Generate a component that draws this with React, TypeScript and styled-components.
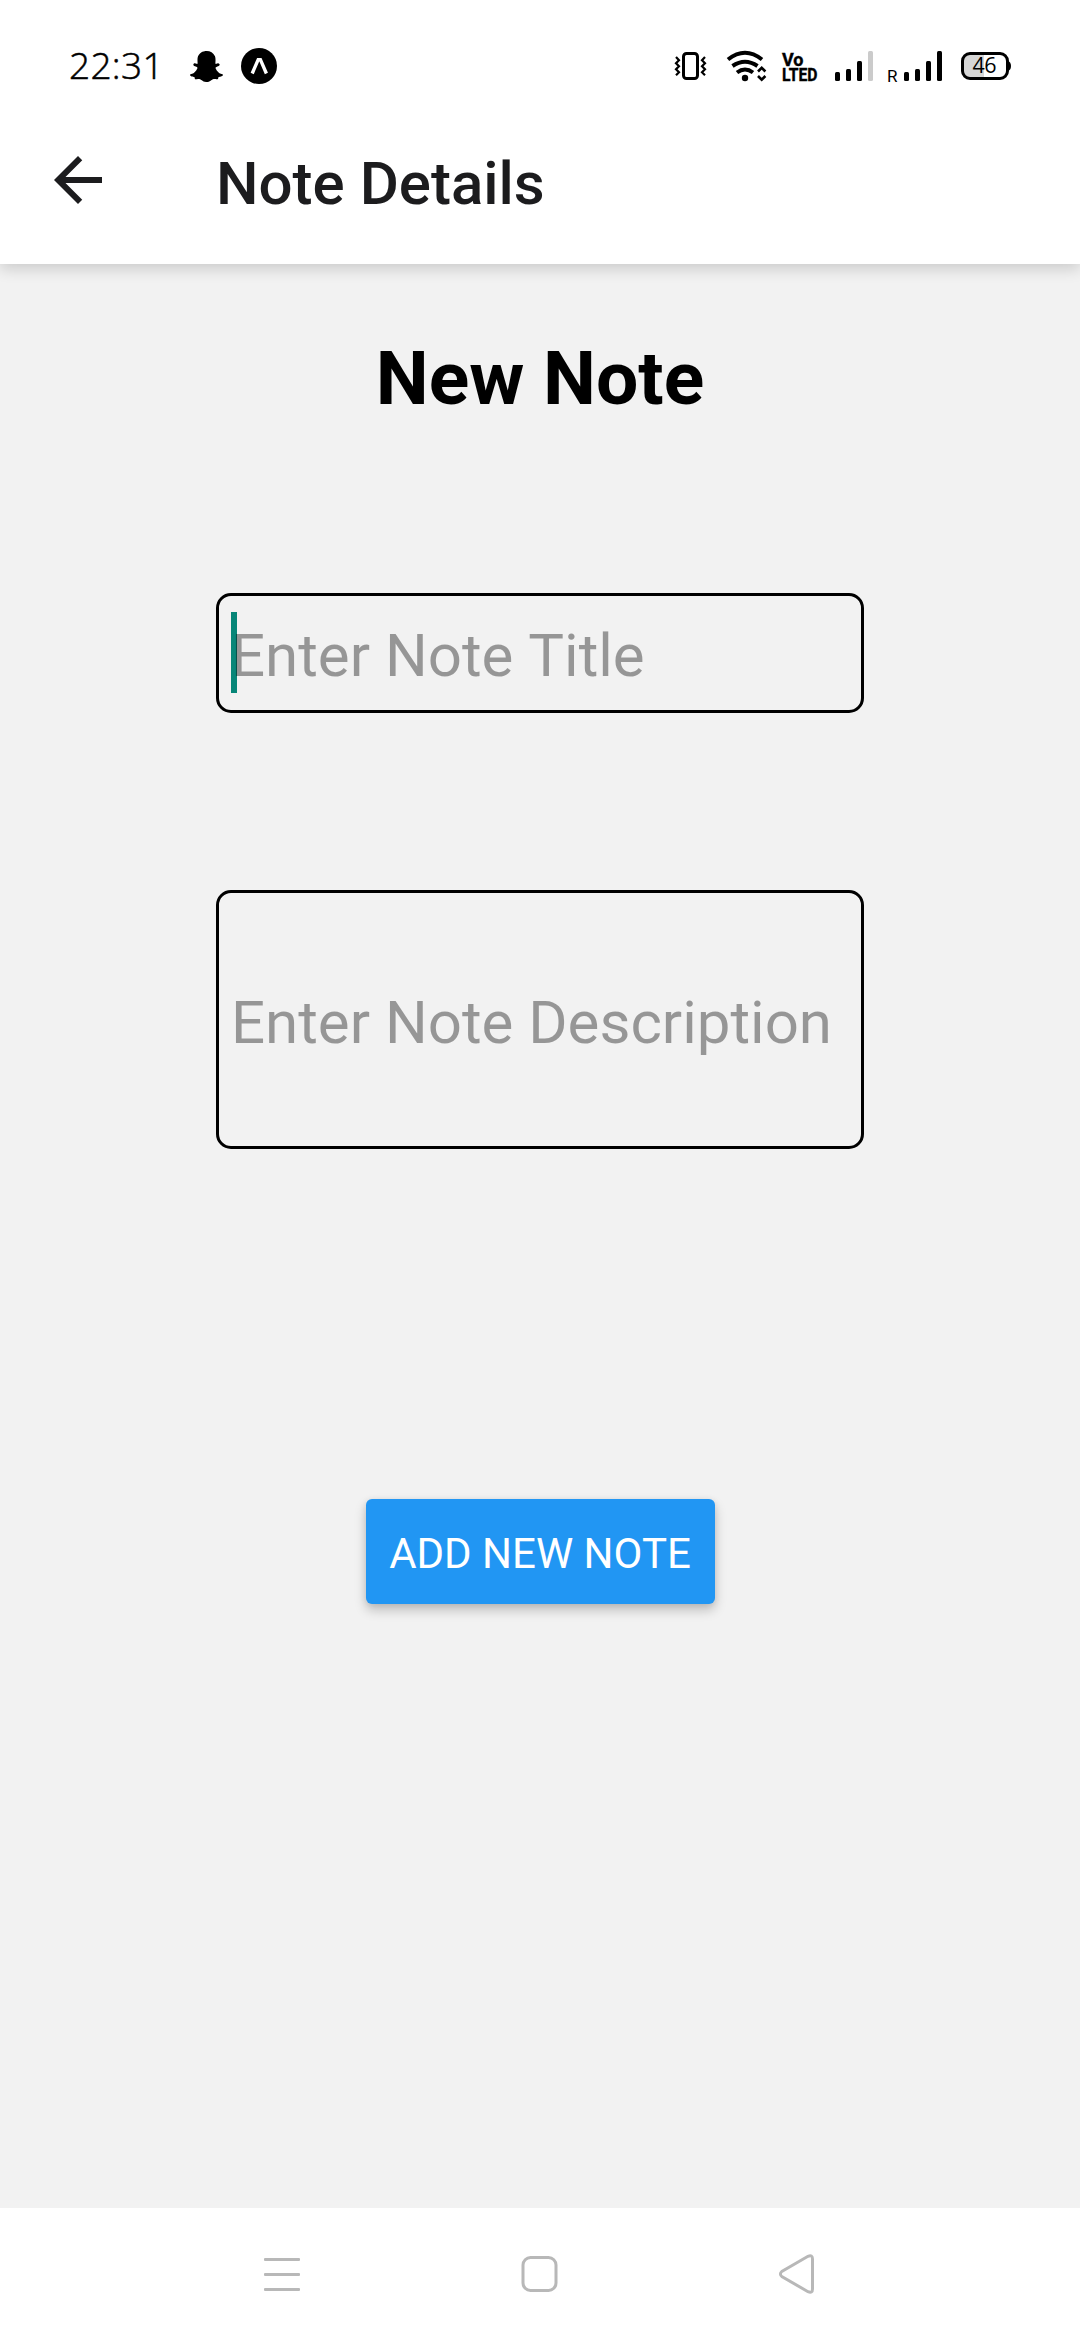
import React from "react";
import styled, { createGlobalStyle } from "styled-components";
import { FaSnapchatGhost } from "react-icons/fa";

const GlobalStyle = createGlobalStyle`
  *, *::before, *::after { box-sizing: border-box; }
  body { margin: 0; background: #f2f2f2; font-family: Roboto, "Noto Sans", sans-serif; }
`;

const Screen = styled.div`
  display: flex;
  flex-direction: column;
  width: 1080px;
  height: 2340px;
  background: #f2f2f2;
  overflow: hidden;
`;

const TopArea = styled.div`
  position: relative;
  flex: none;
  height: 264px;
  background: #fff;
  box-shadow: 0 5px 14px rgba(0, 0, 0, 0.16);
`;

const StatusBar = styled.div`
  display: flex;
  align-items: center;
  height: 132px;
  padding: 0 69px 0 69px;
  color: #000;
`;

const Clock = styled.span`
  width: 121px;
  padding-bottom: 3px;
  font: 300 37px/129px "Open Sans", sans-serif;
  letter-spacing: 0.3px;
  -webkit-text-stroke: 0.5px #000;
`;

const NotificationIcons = styled.div`
  display: flex;
  align-items: center;
  gap: 18px;
  flex: 1;

  svg { display: block; }
`;

const SystemIcons = styled.svg`
  display: block;
  width: 340px;
  height: 132px;
  margin-right: -2px;
`;

const AppBar = styled.header`
  display: flex;
  align-items: center;
  height: 96px;
  padding-left: 42px;
`;

const BackButton = styled.button`
  display: block;
  width: 72px;
  height: 72px;
  padding: 0;
  margin-right: 102px;
  border: 0;
  background: none;
  color: #1c1c1e;

  svg { display: block; }
`;

const AppTitle = styled.h1`
  margin: 7px 0 0;
  font-size: 60px;
  line-height: 72px;
  font-weight: 500;
  color: #1c1c1e;
`;

const Content = styled.main`
  display: flex;
  flex: 1;
  flex-direction: column;
  align-items: center;
  padding-top: 64px;
`;

const Heading = styled.h2`
  margin: 0;
  font-size: 75px;
  line-height: 100px;
  font-weight: 700;
  color: #000;
`;

const Field = styled.div<{ $height: number; $top: number }>`
  position: relative;
  flex: none;
  width: 648px;
  height: ${(p) => p.$height}px;
  margin-top: ${(p) => p.$top}px;
  border: 3px solid #000;
  border-radius: 15px;
`;

const Caret = styled.span`
  position: absolute;
  left: 12px;
  top: 16px;
  width: 6px;
  height: 81px;
  background: #078678;
`;

const TextInput = styled.input<{ $offset: number }>`
  position: relative;
  display: block;
  width: 100%;
  height: 100%;
  padding: ${(p) => p.$offset}px 0 0 12px;
  border: 0;
  outline: 0;
  background: transparent;
  font: 400 60px/72px Roboto, "Noto Sans", sans-serif;
  font-kerning: none;

  &::placeholder { color: rgba(0, 0, 0, 0.38); opacity: 1; }
`;

const SubmitButton = styled.button`
  flex: none;
  width: 349px;
  height: 105px;
  margin-top: 350px;
  padding: 4px 0 0;
  border: 0;
  border-radius: 6px;
  background: #2196f3;
  color: #fff;
  font: 400 42px/50px Roboto, "Noto Sans", sans-serif;
  white-space: nowrap;
  box-shadow: 0 6px 12px rgba(0, 0, 0, 0.22), 0 1px 6px rgba(0, 0, 0, 0.08);
`;

const NavBar = styled.nav`
  display: flex;
  flex: none;
  align-items: center;
  justify-content: space-between;
  height: 132px;
  padding: 0 264px;
  background: #fff;

  svg { display: block; overflow: visible; }
`;

const barTops = [72, 69, 61, 51];

function SignalBars({ x, lit }: { x: number; lit: number }) {
  return (
    <g>
      {barTops.map((top, i) => (
        <rect key={top} x={x + i * 11} y={top} width={5} height={81 - top} rx={1.5} fill={i < lit ? "#000" : "#cbcbcb"} />
      ))}
    </g>
  );
}

function StatusIcons() {
  return (
    <SystemIcons viewBox="673 0 340 132">
      <g fill="none" stroke="#000" strokeWidth="3">
        <rect x="683.5" y="53.5" width="14" height="25" rx="3" />
        <path d="M676 57l3 3.2-3 3 3 3-3 3 3 3-3 3M705 57l-3 3.2 3 3-3 3 3 3-3 3 3 3" strokeWidth="2.2" />
        <path d="M728 59.5Q745 46 762 59.5" strokeWidth="4" />
        <path d="M732.5 66Q745 57.5 757.5 66" strokeWidth="4" />
        <path d="M737 72.5Q745 66.5 753 72.5" strokeWidth="4" />
        <path d="M758 71.5l3.7-3.7 3.7 3.7M758 76l3.7 3.7 3.7-3.7" strokeWidth="2.6" />
      </g>
      <circle cx="745" cy="78" r="3.2" />
      <text fontFamily="Roboto, sans-serif" fontWeight="700" fontSize="19" stroke="#000" strokeWidth="0.4">
        <tspan x="782" y="65.5" textLength="21.5" lengthAdjust="spacingAndGlyphs">Vo</tspan>
        <tspan x="782" y="80.7" textLength="35.5" lengthAdjust="spacingAndGlyphs">LTED</tspan>
      </text>
      <SignalBars x={835} lit={3} />
      <text x="887" y="81.5" fontFamily="Roboto, sans-serif" fontSize="17">R</text>
      <SignalBars x={904} lit={4} />
      <path d="M970 54H984V78H970Q963 78 963 71V61Q963 54 970 54Z" fill="#d6d6d6" />
      <rect x="962.5" y="53.5" width="45" height="25" rx="7.5" fill="none" stroke="#000" strokeWidth="3" />
      <path d="M1008 61q3 1 3 5t-3 5z" />
      <text x="972.5" y="73" fontFamily="Open Sans, sans-serif" fontSize="21.5" textLength="24">46</text>
    </SystemIcons>
  );
}

export default function App() {
  return (
    <>
      <GlobalStyle />
      <Screen>
        <TopArea>
          <StatusBar>
            <Clock>22:31</Clock>
            <NotificationIcons>
              <FaSnapchatGhost size={33} />
              <svg width="36" height="36" viewBox="0 0 36 36">
                <circle cx="18" cy="18" r="18" />
                <path d="M11.2 25.5L17.2 11.6H19.4L25.4 25.5" fill="none" stroke="#fff" strokeWidth="3.4" />
              </svg>
            </NotificationIcons>
            <StatusIcons />
          </StatusBar>
          <AppBar>
            <BackButton aria-label="Back">
              <svg width="72" height="72" viewBox="0 0 24 24" fill="currentColor">
                <path d="M20 11H7.83l5.59-5.59L12 4l-8 8 8 8 1.41-1.41L7.83 13H20v-2z" />
              </svg>
            </BackButton>
            <AppTitle>Note Details</AppTitle>
          </AppBar>
        </TopArea>
        <Content>
          <Heading>New Note</Heading>
          <Field $height={120} $top={165}>
            <Caret />
            <TextInput $offset={4} placeholder="Enter Note Title" />
          </Field>
          <Field $height={259} $top={177}>
            <TextInput $offset={6} placeholder="Enter Note Description" />
          </Field>
          <SubmitButton>ADD NEW NOTE</SubmitButton>
        </Content>
        <NavBar>
          <svg width="36" height="36" viewBox="0 0 36 36" fill="#b8b8b8">
            <rect y="2" width="36" height="3" rx="1" />
            <rect y="17" width="36" height="3" rx="1" />
            <rect y="32" width="36" height="3" rx="1" />
          </svg>
          <svg width="36" height="36" viewBox="0 0 36 36" fill="none" stroke="#b8b8b8" strokeWidth="3">
            <rect x="2" y="1.5" width="33" height="33" rx="7.5" />
          </svg>
          <svg width="39" height="40" viewBox="0 0 39 40" fill="none" stroke="#b8b8b8" strokeWidth="3">
            <path d="M31 2.3Q35.5 .3 35.5 5V35Q35.5 39.7 31 37.7L4.8 22.5Q2 20 4.8 17.5Z" />
          </svg>
        </NavBar>
      </Screen>
    </>
  );
}
